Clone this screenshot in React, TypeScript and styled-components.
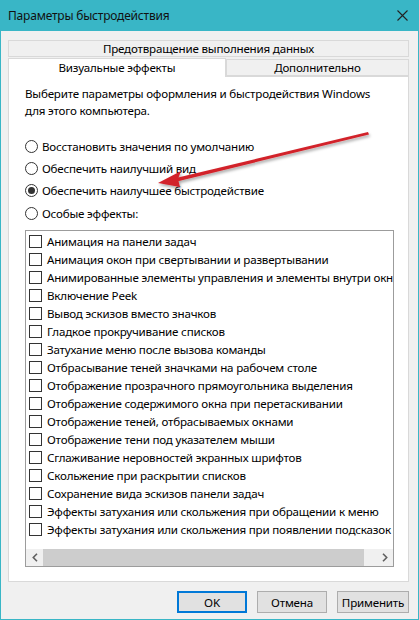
import styled, { createGlobalStyle } from 'styled-components'

const GlobalStyle = createGlobalStyle`
  html, body {
    margin: 0;
    padding: 0;
    background: #ffffff;
  }
  body {
    font-family: "Noto Sans", "Open Sans", "DejaVu Sans", sans-serif;
    font-size: 11.6px;
    letter-spacing: -0.2px;
    color: #000;
  }
`

const Window = styled.div`
  position: relative;
  width: 419px;
  height: 620px;
  box-sizing: border-box;
  border: 1px solid #39b6c6;
  border-top: none;
  background: #f0f0f0;
  display: flex;
  flex-direction: column;
  overflow: hidden;
`

const TitleBar = styled.div`
  height: 31px;
  flex-shrink: 0;
  background: #39b6c6;
  display: flex;
  align-items: center;
  justify-content: space-between;
  padding: 0 10px 0 7px;
  font-size: 12px;
  color: #111;
`

const Body = styled.div`
  flex: 1;
  display: flex;
  flex-direction: column;
  padding: 9px 9px 0 7px;
`

const TabRow = styled.div<{ $h: number }>`
  display: flex;
  align-items: flex-end;
  height: ${p => p.$h}px;
`

const Tab = styled.div<{ $active?: boolean; $grow?: number }>`
  flex: ${p => p.$grow ?? 1};
  box-sizing: border-box;
  height: ${p => (p.$active ? 19 : 17)}px;
  display: flex;
  align-items: center;
  justify-content: center;
  background: ${p => (p.$active ? '#ffffff' : '#f0f0f0')};
  border: 1px solid #d9d9d9;
  border-bottom: ${p => (p.$active ? 'none' : '1px solid #d9d9d9')};
  margin-bottom: ${p => (p.$active ? -1 : 0)}px;
  position: relative;
  z-index: ${p => (p.$active ? 1 : 0)};
  line-height: 1;
`

const Panel = styled.div`
  box-sizing: border-box;
  height: 506px;
  background: #ffffff;
  border: 1px solid #d9d9d9;
  padding: 8px 14px 0 16px;
  display: flex;
  flex-direction: column;
`

const Intro = styled.p`
  margin: 0;
  line-height: 17px;
`

const RadioGroup = styled.div`
  display: flex;
  flex-direction: column;
  margin-top: 16px;
`

const RadioRow = styled.label`
  display: flex;
  align-items: center;
  height: 22.3px;
  gap: 4px;
`

const RadioCircle = styled.span<{ $checked?: boolean }>`
  width: 13px;
  height: 13px;
  box-sizing: border-box;
  border: 1px solid #333;
  border-radius: 50%;
  display: flex;
  align-items: center;
  justify-content: center;
  background: #fff;
  &::after {
    content: '';
    display: ${p => (p.$checked ? 'block' : 'none')};
    width: 7px;
    height: 7px;
    border-radius: 50%;
    background: #333;
  }
`

const ListBox = styled.div`
  margin-top: 6px;
  height: 337px;
  box-sizing: border-box;
  border: 1px solid #9c9c9c;
  display: flex;
  flex-direction: column;
  overflow: hidden;
`

const ListItems = styled.div`
  flex: 1;
  padding-top: 1px;
  overflow: hidden;
`

const CheckRow = styled.div`
  display: flex;
  align-items: center;
  height: 18px;
  padding-left: 3px;
  gap: 5px;
  white-space: nowrap;
`

const CheckBox = styled.span`
  flex-shrink: 0;
  width: 13px;
  height: 13px;
  box-sizing: border-box;
  border: 1px solid #333;
  background: #fff;
`

const HScroll = styled.div`
  height: 17px;
  flex-shrink: 0;
  display: flex;
  background: #f0f0f0;
`

const ScrollArrow = styled.div`
  width: 17px;
  display: flex;
  align-items: center;
  justify-content: center;
`

const ScrollTrack = styled.div`
  flex: 1;
  display: flex;
  padding-right: 12px;
`

const ScrollThumb = styled.div`
  flex: 1;
  background: #cdcdcd;
`

const Footer = styled.div`
  display: flex;
  justify-content: flex-end;
  gap: 10px;
  padding: 9px 0 0;
`

const Button = styled.button<{ $default?: boolean; $w: number }>`
  width: ${p => p.$w}px;
  height: 22px;
  box-sizing: border-box;
  background: #e1e1e1;
  border: 1px solid ${p => (p.$default ? '#0078d7' : '#adadad')};
  box-shadow: ${p => (p.$default ? 'inset 0 0 0 1px #0078d7' : 'none')};
  font-family: inherit;
  font-size: 11.6px;
  letter-spacing: -0.2px;
  color: #000;
  padding: 0;
`

const ArrowLayer = styled.svg`
  position: absolute;
  left: 0;
  top: 0;
  pointer-events: none;
`

const effects = [
  'Анимация на панели задач',
  'Анимация окон при свертывании и развертывании',
  'Анимированные элементы управления и элементы внутри окна',
  'Включение Peek',
  'Вывод эскизов вместо значков',
  'Гладкое прокручивание списков',
  'Затухание меню после вызова команды',
  'Отбрасывание теней значками на рабочем столе',
  'Отображение прозрачного прямоугольника выделения',
  'Отображение содержимого окна при перетаскивании',
  'Отображение теней, отбрасываемых окнами',
  'Отображение тени под указателем мыши',
  'Сглаживание неровностей экранных шрифтов',
  'Скольжение при раскрытии списков',
  'Сохранение вида эскизов панели задач',
  'Эффекты затухания или скольжения при обращении к меню',
  'Эффекты затухания или скольжения при появлении подсказок',
]

const options = [
  { label: 'Восстановить значения по умолчанию', checked: false },
  { label: 'Обеспечить наилучший вид', checked: false },
  { label: 'Обеспечить наилучшее быстродействие', checked: true },
  { label: 'Особые эффекты:', checked: false },
]

const App = (): JSX.Element => {
  return (
    <>
      <GlobalStyle />
      <Window>
        <TitleBar>
          <span>Параметры быстродействия</span>
          <svg width='11' height='11' viewBox='0 0 11 11'>
            <path d='M0.5 0.5 L10.5 10.5 M10.5 0.5 L0.5 10.5' stroke='#222' strokeWidth='1.1' />
          </svg>
        </TitleBar>
        <Body>
          <TabRow $h={17}>
            <Tab>Предотвращение выполнения данных</Tab>
          </TabRow>
          <TabRow $h={19}>
            <Tab $active $grow={218}>Визуальные эффекты</Tab>
            <Tab $grow={183}>Дополнительно</Tab>
          </TabRow>
          <Panel>
            <Intro>
              Выберите параметры оформления и быстродействия Windows<br />
              для этого компьютера.
            </Intro>
            <RadioGroup>
              {options.map(o => (
                <RadioRow key={o.label}>
                  <RadioCircle $checked={o.checked} />
                  {o.label}
                </RadioRow>
              ))}
            </RadioGroup>
            <ListBox>
              <ListItems>
                {effects.map(e => (
                  <CheckRow key={e}>
                    <CheckBox />
                    {e}
                  </CheckRow>
                ))}
              </ListItems>
              <HScroll>
                <ScrollArrow>
                  <svg width='6' height='9' viewBox='0 0 6 9'>
                    <path d='M5 0.8 L1.3 4.5 L5 8.2' fill='none' stroke='#606060' strokeWidth='1.6' />
                  </svg>
                </ScrollArrow>
                <ScrollTrack><ScrollThumb /></ScrollTrack>
                <ScrollArrow>
                  <svg width='6' height='9' viewBox='0 0 6 9'>
                    <path d='M1 0.8 L4.7 4.5 L1 8.2' fill='none' stroke='#606060' strokeWidth='1.6' />
                  </svg>
                </ScrollArrow>
              </HScroll>
            </ListBox>
          </Panel>
          <Footer>
            <Button $default $w={70}>OK</Button>
            <Button $w={70}>Отмена</Button>
            <Button $w={72}>Применить</Button>
          </Footer>
        </Body>
        <ArrowLayer width='419' height='620' viewBox='0 0 419 620'>
          <defs>
            <filter id='shadow' x='-10%' y='-50%' width='120%' height='200%'>
              <feDropShadow dx='1' dy='2' stdDeviation='1.5' floodColor='#000' floodOpacity='0.35' />
            </filter>
          </defs>
          <g filter='url(#shadow)' fill='#d2232a'>
            <polygon points='367,132 368,134.5 176,181.5 175,178' />
            <polygon points='157,183 180,171 177,179 179,187' />
          </g>
        </ArrowLayer>
      </Window>
    </>
  )
}

export default App
